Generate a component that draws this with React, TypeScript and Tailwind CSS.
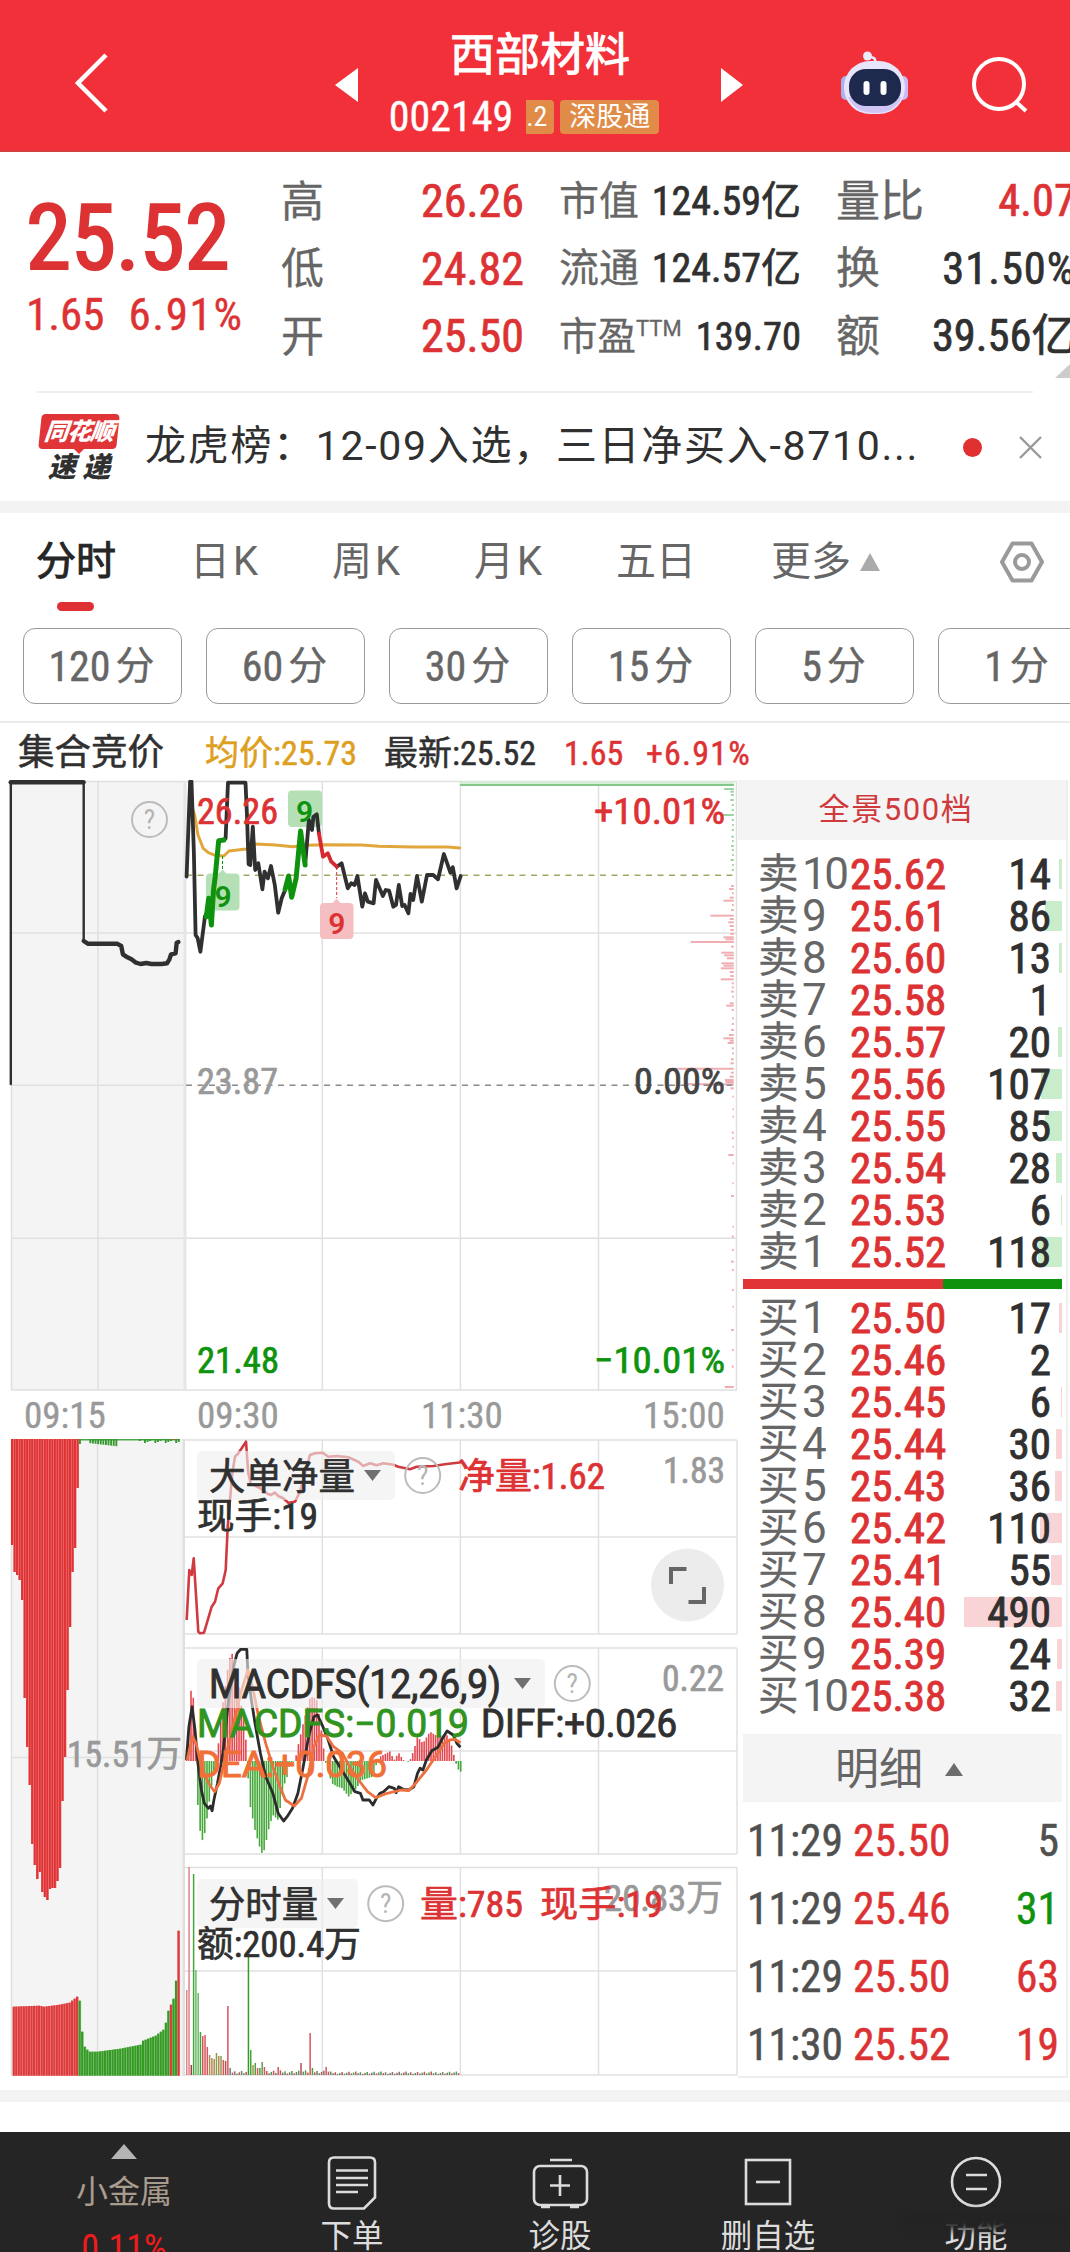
import React from 'react';

type Point = [number, number];

const RED = '#dd3234';
const GREEN = '#0f930f';
const GRID = '#e0e0e0';

// Projects raw sample points into chart coordinates and returns a polyline string
const project = (pts: Point[], ox: number, oy: number, kx: number, ky = 3) =>
  pts.map(([x, y]) => `${(ox + x / kx).toFixed(1)},${(oy + y / ky).toFixed(1)}`).join(' ');

// Linear interpolation over a sorted list of points
const sample = (pts: Point[], x: number) => {
  for (let i = 1; i < pts.length; i++) {
    const [x0, y0] = pts[i - 1];
    const [x1, y1] = pts[i];
    if (x <= x1) return y0 + ((y1 - y0) * (x - x0)) / (x1 - x0 || 1);
  }
  return pts[pts.length - 1][1];
};

const sells: [number, string, number][] = [
  [10, '25.62', 14], [9, '25.61', 86], [8, '25.60', 13], [7, '25.58', 1], [6, '25.57', 20],
  [5, '25.56', 107], [4, '25.55', 85], [3, '25.54', 28], [2, '25.53', 6], [1, '25.52', 118],
];
const buys: [number, string, number][] = [
  [1, '25.50', 17], [2, '25.46', 2], [3, '25.45', 6], [4, '25.44', 30], [5, '25.43', 36],
  [6, '25.42', 110], [7, '25.41', 55], [8, '25.40', 490], [9, '25.39', 24], [10, '25.38', 32],
];
const trades = [
  { time: '11:29', price: '25.50', volume: 5, color: 'text-[#505050]' },
  { time: '11:29', price: '25.46', volume: 31, color: 'text-[#0f930f]' },
  { time: '11:29', price: '25.50', volume: 63, color: 'text-[#dd3234]' },
  { time: '11:30', price: '25.52', volume: 19, color: 'text-[#dd3234]' },
];

const auctionLine: Point[] = [
  [243, 37], [243, 513], [255, 521], [340, 521], [352, 528], [357, 553], [370, 562], [382, 568], [395, 578],
  [408, 582], [425, 579], [440, 582], [470, 582], [485, 580], [492, 568], [497, 553], [510, 550], [513, 518], [518, 516],
];
const priceSegments: { color: string; points: Point[] }[] = [
  { color: '#303030', points: [[542, 320], [552, 35], [556, 35], [563, 250], [568, 495], [574, 505], [582, 545], [595, 440], [600, 430]] },
  { color: '#303030', points: [[650, 210], [655, 205], [662, 38], [713, 38], [717, 130], [722, 283], [727, 285], [734, 170], [741, 300], [750, 280], [762, 358], [768, 305], [778, 325], [787, 288], [798, 345], [808, 428], [818, 385], [828, 360]] },
  { color: '#303030', points: [[886, 285], [897, 150], [906, 180], [910, 140], [920, 133], [926, 190]] },
  { color: '#303030', points: [[978, 290], [992, 280], [1010, 355], [1020, 340], [1030, 345], [1038, 318], [1052, 410], [1060, 370], [1068, 395], [1085, 400], [1092, 330], [1112, 378], [1120, 360], [1130, 362], [1142, 410], [1150, 405], [1158, 345], [1168, 408], [1175, 405], [1186, 430], [1192, 372], [1200, 390], [1211, 318], [1225, 395], [1240, 315], [1258, 315], [1272, 328], [1289, 252], [1308, 308], [1315, 292], [1326, 355], [1338, 318]] },
  { color: GREEN, points: [[599, 440], [606, 385], [614, 465], [620, 360], [625, 320], [628, 285], [635, 212], [650, 210]] },
  { color: GREEN, points: [[828, 358], [838, 318], [847, 382], [860, 325], [873, 183], [886, 285]] },
  { color: '#d8282f', points: [[926, 190], [938, 260], [952, 250], [962, 275], [978, 290]] },
];
const averageLine: Point[] = [
  [556, 105], [565, 135], [575, 195], [590, 235], [605, 248], [625, 256], [650, 258], [665, 243], [715, 237], [742, 222],
  [800, 225], [850, 230], [890, 226], [940, 224], [1050, 225], [1100, 229], [1200, 231], [1300, 231], [1335, 234],
];

// Price distribution along the right edge: [y, length]
const distribution: Point[] = [
  [57, 28], [65, 10], [75, 8], [90, 10], [105, 6], [120, 6], [135, 32], [150, 6], [165, 5], [180, 6], [200, 7], [213, 5], [228, 8],
  [240, 6], [255, 5], [270, 9], [285, 5], [300, 6], [348, 8], [357, 14], [370, 5], [383, 12], [392, 30], [405, 5], [420, 8],
  [437, 68], [447, 12], [457, 16], [468, 12], [480, 10], [492, 10], [502, 30], [508, 24], [516, 125], [530, 8], [548, 36],
  [556, 28], [565, 20], [580, 36], [587, 30], [595, 38], [606, 12], [618, 10], [628, 38], [640, 6], [652, 6], [665, 8],
  [680, 5], [700, 12], [707, 22], [720, 6], [745, 5], [762, 6], [780, 8], [795, 14], [805, 30], [812, 12], [819, 18],
  [835, 6], [850, 5], [868, 8], [880, 10], [896, 172], [908, 8], [920, 12], [930, 26], [936, 24], [943, 140], [955, 10],
  [980, 4], [1018, 4], [1040, 4], [1088, 6], [1105, 5], [1130, 4], [1155, 16], [1180, 4], [1240, 4], [1278, 8],
  [1370, 4], [1400, 6], [1440, 5], [1475, 8], [1500, 5], [1560, 5], [1610, 4], [1680, 8], [1740, 5], [1790, 6], [1851, 26],
];

const netVolumeLine: Point[] = [
  [560, 840], [568, 690], [575, 705], [581, 655], [595, 875], [600, 880], [612, 878], [622, 845], [635, 800], [645, 785],
  [655, 745], [668, 730], [677, 690], [683, 560], [690, 480], [697, 400], [705, 350], [715, 340], [725, 325], [738, 305],
  [745, 400], [752, 430], [790, 450], [800, 460], [812, 465], [825, 458], [835, 468], [850, 475], [865, 488], [885, 485],
  [900, 455], [915, 400], [930, 345], [945, 340], [968, 338], [985, 350], [1010, 348], [1045, 352], [1075, 365],
  [1090, 378], [1110, 370], [1130, 376], [1150, 370], [1180, 374], [1195, 380], [1230, 388], [1250, 380], [1300, 378],
  [1340, 372], [1385, 367],
];

const macdEnvelope: Point[] = [
  [17, 415], [25, 320], [32, 190], [38, 240], [42, 330], [46, 423], [50, 555], [57, 640], [65, 668], [75, 600], [82, 545],
  [92, 470], [98, 430], [104, 415], [110, 340], [120, 250], [133, 150], [143, 95], [150, 110], [160, 150], [170, 250],
  [182, 300], [187, 423], [197, 560], [210, 630], [228, 700], [236, 690], [250, 620], [260, 585], [275, 600], [290, 500],
  [300, 470], [308, 430], [322, 423], [330, 380], [345, 310], [355, 270], [365, 230], [382, 235], [392, 300], [400, 370],
  [407, 423], [425, 490], [440, 500], [455, 505], [472, 530], [490, 510], [510, 480], [540, 470], [552, 425], [560, 410],
  [590, 393], [598, 423], [612, 398], [625, 420], [640, 426], [645, 418], [655, 390], [665, 350], [680, 370], [700, 335],
  [715, 345], [730, 350], [745, 340], [760, 375], [768, 410], [771, 425], [780, 450], [786, 455],
];
const diffLine: Point[] = [
  [18, 420], [25, 320], [34, 260], [42, 330], [50, 430], [60, 510], [68, 550], [80, 565], [85, 558], [90, 572], [95, 540],
  [105, 490], [120, 400], [135, 250], [150, 140], [160, 100], [170, 88], [187, 88], [190, 160], [200, 240], [210, 310],
  [225, 400], [240, 470], [260, 520], [275, 580], [290, 603], [300, 590], [315, 565], [330, 520], [345, 440], [360, 350],
  [375, 290], [385, 285], [400, 320], [415, 360], [430, 410], [450, 445], [470, 480], [490, 515], [505, 520], [512, 540],
  [530, 540], [540, 555], [550, 535], [560, 520], [570, 515], [585, 500], [600, 505], [605, 518], [612, 500], [625, 508],
  [640, 510], [655, 500], [665, 460], [672, 445], [680, 450], [690, 420], [705, 392], [722, 382], [735, 355], [748, 333],
  [765, 345], [775, 370], [785, 382],
];
const deaLine: Point[] = [
  [20, 420], [35, 350], [45, 370], [60, 440], [80, 490], [97, 515], [110, 490], [130, 400], [150, 310], [170, 220],
  [190, 150], [205, 210], [220, 290], [240, 370], [260, 440], [280, 500], [295, 540], [320, 558], [340, 535], [360, 460],
  [375, 380], [390, 345], [410, 348], [430, 380], [455, 400], [475, 440], [500, 480], [525, 515], [548, 533], [580, 520],
  [620, 510], [640, 512], [660, 490], [690, 450], [715, 410], [740, 370], [755, 360], [770, 358], [785, 368],
];

// Bottom edge of every unmatched-volume bar in the call auction
const auctionDepth = [
  1545, 1572, 1575, 1580, 1600, 1698, 1747, 1785, 1844, 1865, 1879, 1872, 1892, 1897, 1900, 1889, 1888, 1888, 1881,
  1868, 1801, 1757, 1690, 1627, 1572, 1548, 1488,
];
const auctionVolume: Point[] = [
  [0, 69], [10, 70], [12, 69], [18, 71], [22, 73], [25, 79], [26, 75], [27, 44], [28, 29], [29, 26], [30, 24], [33, 24],
  [42, 27], [50, 31], [51, 35], [56, 40], [59, 46], [60, 53], [61, 65], [62, 71], [63, 77], [64, 95], [65, 145],
];

// Minute volume: taller bars are listed, the rest is low turnover
const tallVolume: Record<number, [number, string]> = {
  0: [85, '#e0838a'], 1: [208, '#e0838a'], 2: [10, '#9a4040'], 3: [201, '#41a53c'], 4: [105, '#6bb966'], 5: [82, '#6bb966'],
  6: [43, '#41a53c'], 7: [39, '#d8555c'], 8: [40, '#d8555c'], 9: [28, '#d8555c'], 10: [20, '#b08a50'], 11: [17, '#b08a50'],
  12: [16, '#b08a50'], 13: [22, '#8c9a50'], 14: [19, '#b08a50'], 15: [19, '#8c9a50'], 16: [15, '#d8555c'], 17: [14, '#b05050'],
  18: [69, '#d8555c'], 19: [7, '#777777'], 27: [120, '#2f9c2a'], 28: [25, '#41a53c'], 29: [10, '#b08a50'], 30: [12, '#41a53c'],
  31: [7, '#d8555c'], 32: [7, '#41a53c'], 33: [13, '#6b9a50'], 34: [8, '#d8555c'], 40: [8, '#d8555c'], 50: [12, '#b05050'],
  54: [42, '#d8555c'], 55: [7, '#41a53c'], 61: [8, '#d8555c'],
};

interface LabelProps {
  x: number;
  y: number;
  w: number;
  size?: number;
  fill?: string;
  wide?: boolean;
  children: string;
}

// Chart text fitted to a fixed width
const Label: React.FC<LabelProps> = ({ x, y, w, size = 36, fill = '#303030', wide, children }) => (
  <text
    x={x}
    y={y}
    textLength={w}
    lengthAdjust="spacingAndGlyphs"
    fontSize={size}
    fill={fill}
    stroke={fill}
    strokeWidth={wide ? 1 : 0.7}
    className={wide ? "font-['Roboto','Noto_Sans_CJK_SC',sans-serif]" : ''}
  >
    {children}
  </text>
);

const Help: React.FC<{ x: number; y: number }> = ({ x, y }) => (
  <g>
    <circle cx={x} cy={y} r={17.5} fill="none" stroke="#bcbcbc" strokeWidth={2} />
    <text x={x} y={y + 9.5} fontSize={27} fill="#b4b4b4" textAnchor="middle">?</text>
  </g>
);

const Selector: React.FC<{ y: number; w: number; textW: number; wide?: boolean; children: string }> = ({ y, w, textW, wide, children }) => (
  <g>
    <rect x={197} y={y} width={w} height={49} rx={5} fill="#efefef" fillOpacity={0.62} />
    <Label x={209} y={y + 38.5} w={textW} size={wide ? 40 : 37} wide={wide}>{children}</Label>
    <path d={`M${197 + w - 31} ${y + 19}h17l-8.5 11z`} fill="#707070" />
  </g>
);

const PanelGrid: React.FC<{ top: number; mid: number; bottom: number }> = ({ top, mid, bottom }) => (
  <g stroke={GRID} strokeWidth={1.5}>
    {[top, mid, bottom].map((y) => <line key={y} x1={185} x2={737} y1={y} y2={y} />)}
    {[322.3, 460.4, 598.5].map((x) => <line key={x} x1={x} x2={x} y1={top} y2={bottom} />)}
    <line x1={737} x2={737} y1={top} y2={bottom} />
  </g>
);

const PriceChart: React.FC = () => (
  <svg className="h-[612px] w-[738px]" viewBox="0 780 738 612">
    <rect x={11} y={781} width={174} height={609} fill="#f4f4f4" />
    <g stroke={GRID} strokeWidth={1.5}>
      {[781.5, 933, 1238.3, 1390].map((y) => <line key={y} x1={11} x2={737} y1={y} y2={y} />)}
      <line x1={11} x2={185} y1={1085.3} y2={1085.3} />
      {[11.5, 98, 322.3, 460.4, 598.5, 736.5].map((x) => <line key={x} x1={x} x2={x} y1={781} y2={1390} />)}
      <line x1={185} x2={185} y1={781} y2={1390} strokeWidth={3} stroke="#e6e6e6" />
    </g>

    {distribution.map(([y, len]) => (
      <line
        key={y}
        x1={733.8 - len / 2.904}
        x2={733.8}
        y1={770 + y / 3}
        y2={770 + y / 3}
        stroke={y < 320 ? '#9ad3a0' : '#f0aeb2'}
        strokeWidth={2}
      />
    ))}
    <line x1={460} x2={734} y1={783} y2={783} stroke="#d5efd7" strokeWidth={3} />
    <line x1={460} x2={734} y1={785} y2={785} stroke="#83c88a" strokeWidth={2} />

    <line x1={186} x2={737} y1={875.2} y2={875.2} stroke="#a3a561" strokeWidth={1.6} strokeDasharray="6 5.5" />
    <line x1={186} x2={737} y1={1085.3} y2={1085.3} stroke="#8a8a8a" strokeWidth={1.6} strokeDasharray="6 5.5" />

    <g strokeLinejoin="round" strokeLinecap="round" fill="none">
      <path d="M10.8 1084V782" stroke="#303030" strokeWidth={2.4} />
      <path d="M10.8 782.3H83.5" stroke="#303030" strokeWidth={4.6} />
      <polyline points={project(auctionLine.slice(0, 2), 0, 770, 2.904)} stroke="#303030" strokeWidth={2.4} />
      <polyline points={project(auctionLine.slice(1), 0, 770, 2.904)} stroke="#303030" strokeWidth={4.4} />
      <polyline points={project(averageLine, 0, 770, 2.904)} stroke="#e0a63c" strokeWidth={3} />
    </g>

    <path d="M210 873.5h8.5l4-4 4 4h9a4 4 0 0 1 4 4v29a4 4 0 0 1-4 4h-25.5a4 4 0 0 1-4-4v-29a4 4 0 0 1 4-4z" fill="#b5e0b5" />
    <rect x={288} y={790.5} width={34} height={36.5} rx={4} fill="#b5e0b5" />
    <path d="M324 903h8.5l4-4.500 4 4.500h9a4 4 0 0 1 4 4v28a4 4 0 0 1-4 4h-25.5a4 4 0 0 1-4-4v-28a4 4 0 0 1 4-4z" fill="#f5bfc2" />
    <line x1={222.5} x2={222.5} y1={856} y2={870} stroke={GREEN} strokeDasharray="3 2" />
    <line x1={336.7} x2={336.7} y1={867} y2={898} stroke={RED} strokeDasharray="3 2" />

    <g strokeLinejoin="round" strokeLinecap="round" fill="none">
      {priceSegments.map((s, i) => (
        <polyline key={i} points={project(s.points, 0, 770, 2.904)} stroke={s.color} strokeWidth={s.color === GREEN ? 5 : 3.8} />
      ))}
    </g>
    <g fontSize={30} textAnchor="middle" className="font-['Roboto'] font-semibold">
      <text x={223} y={906.5} fill={GREEN}>9</text>
      <text x={304.5} y={822} fill={GREEN}>9</text>
      <text x={336.7} y={934} fill={RED}>9</text>
    </g>

    <Help x={149.5} y={819.5} />
    <Label x={197} y={823.5} w={81} size={37} fill={RED}>26.26</Label>
    <Label x={594} y={824} w={131} size={37} fill={RED}>+10.01%</Label>
    <Label x={197} y={1094} w={81} size={37} fill="#999999">23.87</Label>
    <Label x={634} y={1094} w={91} size={37} fill="#444444">0.00%</Label>
    <Label x={197} y={1373} w={82} size={37} fill={GREEN}>21.48</Label>
    <Label x={594} y={1373} w={131} size={37} fill={GREEN}>−10.01%</Label>
  </svg>
);

const AuctionVolume: React.FC = () => (
  <svg className="h-[640px] w-[185px]" viewBox="0 1438 185 640">
    <rect x={11} y={1439} width={174} height={637} fill="#f4f4f4" />
    <g stroke={GRID} strokeWidth={1.5}>
      <line x1={11} x2={185} y1={1757.5} y2={1757.5} />
      <line x1={97.5} x2={97.5} y1={1439} y2={2076} />
      <line x1={11.5} x2={11.5} y1={1439} y2={2076} />
      <line x1={184} x2={184} y1={1439} y2={2076} strokeWidth={3} />
    </g>
    {auctionDepth.map((y, i) => (
      <g key={i}>
        <rect x={11 + i * 2.52} y={1439} width={2.52} height={y - 1439} fill="#ec7a7a" />
        <rect x={11 + i * 2.52} y={1439} width={2} height={y - 1439} fill="#df3335" />
      </g>
    ))}
    <rect x={79} y={1439} width={101} height={1.5} fill="#4fa64b" />
    {Array.from({ length: 39 }, (_, i) => {
      const h = i === 0 ? 5 : i > 3 && i < 15 ? 3 + i * 0.3 : i > 22 ? 1 + ((i * 7) % 4) : 0;
      return <rect key={i} x={79 + i * 2.6} y={1439} width={1.9} height={h} fill={i === 36 ? RED : '#35992f'} />;
    })}
    {Array.from({ length: 66 }, (_, i) => {
      const h = sample(auctionVolume, i);
      const red = i < 26 || i === 62 || i === 65;
      return (
        <g key={i}>
          <rect x={12.7 + i * 2.535} y={2075.7 - h} width={2.535} height={h} fill={red ? '#ec7f7f' : '#86c67e'} />
          <rect x={12.7 + i * 2.535} y={2075.7 - h} width={2} height={h} fill={red ? '#dc3a3c' : '#359a24'} />
        </g>
      );
    })}
    <Label x={67} y={1766.5} w={115} size={37} fill="#999999">15.51万</Label>
  </svg>
);

const NetVolumePanel: React.FC = () => (
  <svg className="h-[204px] w-[553px]" viewBox="185 1438 553 204">
    <PanelGrid top={1440} mid={1537} bottom={1634} />
    <polyline points={project(netVolumeLine, 0, 1340, 3)} fill="none" stroke="#cf3b40" strokeWidth={2.6} strokeLinejoin="round" />
    <Selector y={1451} w={198} textW={146}>大单净量</Selector>
    <Help x={422.7} y={1475.5} />
    <Label x={458} y={1488.5} w={147} fill={RED}>净量:1.62</Label>
    <Label x={197} y={1528.5} w={121}>现手:19</Label>
    <Label x={663} y={1483} w={62} size={37} fill="#999999">1.83</Label>
    <circle cx={687.5} cy={1585} r={36.5} fill="#ececec" />
    <path d="M671 1584v-15h15.5M704 1587v15h-15.5" fill="none" stroke="#666666" strokeWidth={4} />
  </svg>
);

const MacdPanel: React.FC = () => (
  <svg className="h-[217px] w-[553px]" viewBox="185 1642 553 217">
    <PanelGrid top={1648} mid={1751} bottom={1854} />
    {Array.from({ length: 121 }, (_, i) => {
      const x = 18 + i * 6.4;
      const y = sample(macdEnvelope, x);
      const up = y < 423;
      return (
        <rect
          key={i}
          x={180 + x / 2.8 - 0.8}
          y={1620 + Math.min(y, 423) / 3}
          width={1.6}
          height={Math.abs(y - 423) / 3}
          fill={up ? '#e3474f' : '#45a83a'}
        />
      );
    })}
    <polyline points={project(diffLine, 180, 1620, 2.8)} fill="none" stroke="#2c2c2c" strokeWidth={2.8} strokeLinejoin="round" />
    <polyline points={project(deaLine, 180, 1620, 2.8)} fill="none" stroke="#ee7040" strokeWidth={2.8} strokeLinejoin="round" />
    <Selector y={1659} w={348} textW={292} wide>MACDFS(12,26,9)</Selector>
    <Help x={572.3} y={1683.5} />
    <Label x={662} y={1691} w={62} size={37} fill="#999999">0.22</Label>
    <Label x={197} y={1736.5} w={272} size={39} fill="#31941f" wide>MACDFS:−0.019</Label>
    <Label x={481} y={1736.5} w={196} size={39} wide>DIFF:+0.026</Label>
    <Label x={197} y={1776.5} w={190} size={37} fill="#f07038" wide>DEA:+0.036</Label>
  </svg>
);

const VolumePanel: React.FC = () => (
  <svg className="h-[219px] w-[553px]" viewBox="185 1859 553 219">
    <PanelGrid top={1867.5} mid={1971} bottom={2075} />
    {Array.from({ length: 120 }, (_, i) => {
      const noise = 1.5 + ((i * 37) % 11) / 3.2;
      const fallback = ['#777777', '#4f9a4a', '#c0565a'][(i * 13) % 3];
      const [h, color] = tallVolume[i] ?? [i > 62 ? noise * 0.75 : noise, fallback];
      return <rect key={i} x={186 + i * 2.285} y={2075 - h} width={1.5} height={h} fill={color} />;
    })}
    <Selector y={1879} w={161} textW={109}>分时量</Selector>
    <Help x={385.7} y={1903.7} />
    <Label x={604} y={1911} w={119} size={37} fill="#999999">20.83万</Label>
    <Label x={420} y={1917} w={103} fill={RED}>量:785</Label>
    <Label x={540} y={1917} w={123} fill={RED}>现手:19</Label>
    <Label x={197} y={1957} w={164}>额:200.4万</Label>
  </svg>
);

const Header: React.FC = () => (
  <header className="flex h-[152px] items-center border-b-2 border-[#d63c3c] bg-[#f23039] text-white">
    <svg className="mt-[16px] ml-[72px] h-[62px] w-[40px] shrink-0" viewBox="0 0 40 62" fill="none" stroke="currentColor" strokeWidth={4.5}>
      <path d="M34 3L6 31l28 28" />
    </svg>
    <svg className="mt-[19px] ml-[223px] h-[34px] w-[24px] shrink-0" viewBox="0 0 24 34">
      <path d="M0 17L23 0v34z" fill="currentColor" />
    </svg>
    <div className="flex w-[362px] shrink-0 flex-col items-center">
      <h1 className="mt-[16px] text-[45px] leading-[50px] [-webkit-text-stroke:1px]">西部材料</h1>
      <div className="mt-[18px] flex h-[36px] items-center gap-[6px] pr-[32px]">
        <span className="mr-[7px] text-[42px] leading-[36px] [-webkit-text-stroke:0.4px]">002149</span>
        <span className="flex h-[34px] w-[28px] items-center overflow-hidden rounded-r-[4px] bg-[#e08c48] text-[28px]">.2</span>
        <span className="flex h-[34px] w-[99px] items-center justify-center rounded-[4px] bg-[#e08c48] text-[27px]">深股通</span>
      </div>
    </div>
    <svg className="mt-[19px] h-[34px] w-[24px] shrink-0" viewBox="0 0 24 34">
      <path d="M0 0L22 17L0 34z" fill="currentColor" />
    </svg>
    <svg className="mt-[16px] ml-[93px] h-[64px] w-[72px] shrink-0" viewBox="838 51 72 64">
      <path d="M875 64c1-6-1-7-6-7" fill="none" stroke="#e9e6f8" strokeWidth={2.5} />
      <circle cx={867.5} cy={56} r={4.5} fill="#eceafb" />
      <rect x={841} y={76} width={10} height={24} rx={5} fill="#a9b4ee" />
      <rect x={898} y={76} width={10} height={24} rx={5} fill="#c9b9f5" />
      <rect x={844} y={61} width={61} height={53} rx={26} fill="#e8e4fa" />
      <path d="M848 97c6 12 14 16 27 16s21-4 27-16z" fill="#cfc6f5" />
      <rect x={849} y={69} width={52} height={37} rx={17} fill="#1e2a4d" />
      <rect x={863.5} y={81} width={6} height={14} rx={3} fill="#ffffff" />
      <rect x={880.5} y={81} width={6} height={14} rx={3} fill="#ffffff" />
    </svg>
    <svg className="mt-[20px] ml-[60px] h-[60px] w-[60px] shrink-0" viewBox="971 55 60 60" fill="none" stroke="currentColor" strokeWidth={4}>
      <circle cx={1000} cy={84} r={25} />
      <path d="M1016 101l11 10" />
    </svg>
  </header>
);

const Quote: React.FC = () => {
  const row = 'flex h-[67.5px] items-center justify-between whitespace-nowrap';
  const label = 'text-[#666] [-webkit-text-stroke:0.3px]';
  return (
    <section className="relative flex h-[239px] overflow-hidden pt-[16px] text-[#303030] [-webkit-text-stroke:0.7px]">
      <div className="ml-[26px] w-[255px] shrink-0 text-[#dd3234]">
        <div className="mt-[15px] text-[91px] leading-[110px] [-webkit-text-stroke:2.2px]">25.52</div>
        <div className="-mt-[4px] flex gap-[24px] text-[45px] leading-[52px] [-webkit-text-stroke:0.4px]">
          <span>1.65</span>
          <span className="tracking-[1.6px]">6.91%</span>
        </div>
      </div>
      <div className="w-[243px] shrink-0 text-[46px] text-[#dd3234]">
        {[['高', '26.26'], ['低', '24.82'], ['开', '25.50']].map(([k, v]) => (
          <div key={k} className={row}>
            <span className={`text-[43px] ${label}`}>{k}</span>
            <span>{v}</span>
          </div>
        ))}
      </div>
      <div className="ml-[35px] w-[242px] shrink-0 text-[40px]">
        {[['市值', '124.59亿'], ['流通', '124.57亿']].map(([k, v]) => (
          <div key={k} className={row}>
            <span className={`text-[40px] ${label}`}>{k}</span>
            <span>{v}</span>
          </div>
        ))}
        <div className={row}>
          <span className={`flex text-[38.5px] ${label}`}>
            市盈<span className="font-['Roboto'] text-[22px] leading-[42px]">TTM</span>
          </span>
          <span className="text-[38.5px]">139.70</span>
        </div>
      </div>
      <div className="ml-[35px] w-[240px] shrink-0 text-[44.5px]">
        {[['量比', '4.07'], ['换', '31.50%'], ['额', '39.56亿']].map(([k, v]) => (
          <div key={k} className={row}>
            <span className={`text-[44px] ${label}`}>{k}</span>
            <span className={k === '量比' ? 'text-[#dd3234]' : k === '换' ? 'tracking-[1px]' : ''}>{v}</span>
          </div>
        ))}
      </div>
      <svg className="absolute right-0 bottom-[13px] h-[14px] w-[15px]" viewBox="0 0 15 14">
        <path d="M15 0v14H0z" fill="#cccccc" />
      </svg>
    </section>
  );
};

const News: React.FC = () => (
  <section className="flex h-[110px] items-center px-[37px]">
    <div className="flex h-full w-full items-center border-t-2 border-[#eeeeee]">
      <div className="flex w-[84px] shrink-0 flex-col items-center font-black italic">
        <div className="flex h-[35px] w-[78px] -skew-x-6 items-center justify-center rounded-[4px] bg-[#e03436] text-[24px] tracking-[-1px] text-white">同花顺</div>
        <div className="h-0 w-0 border-x-[5px] border-t-[5px] border-x-transparent border-t-[#e03436]" />
        <div className="text-[28px] leading-[27px] text-[#303030]">速 递</div>
      </div>
      <div className="ml-[24px] w-[778px] shrink-0 font-['Roboto','Noto_Sans_CJK_SC',sans-serif] text-[41px] tracking-[1.7px] whitespace-nowrap text-[#303030]">
        龙虎榜：12-09入选，三日净买入-8710...
      </div>
      <div className="ml-[40px] h-[19px] w-[19px] shrink-0 rounded-full bg-[#e03030]" />
      <svg className="ml-[37px] h-[23px] w-[23px] shrink-0" viewBox="0 0 23 23" stroke="#999999" strokeWidth={2.4}>
        <path d="M1 1l21 21M22 1L1 22" />
      </svg>
    </div>
  </section>
);

const Tabs: React.FC = () => (
  <nav className="flex h-[115px] items-start pl-[36px] text-[40px] leading-[98px] text-[#666]">
    <div className="flex w-[154px] flex-col items-start">
      <span className="text-[#262626] [-webkit-text-stroke:1px]">分时</span>
      <span className="-mt-[9px] ml-[21px] h-[9px] w-[37px] rounded-full bg-[#df3033]" />
    </div>
    {['日K', '周K', '月K'].map((t) => (
      <span key={t} className="w-[142px] font-['Roboto','Noto_Sans_CJK_SC',sans-serif] tracking-[3px]">{t}</span>
    ))}
    <span className="w-[155px]">五日</span>
    <span className="w-[89px]">更多</span>
    <svg className="mt-[40px] h-[18px] w-[20px]" viewBox="0 0 20 18"><path d="M10 0l10 18H0z" fill="#aaaaaa" /></svg>
    <svg className="mt-[26px] ml-[119px] h-[46px] w-[46px]" viewBox="0 0 46 46" fill="none" stroke="#9a9a9a" strokeWidth={4}>
      <path d="M13.5 4.500h19L43 23L32.5 41.500h-19L3 23z" strokeLinejoin="round" />
      <circle cx={23} cy={23} r={7} />
    </svg>
  </nav>
);

const Periods: React.FC = () => (
  <div className="flex h-[95px] gap-[24px] overflow-hidden border-b-2 border-[#ebebeb] pl-[23px]">
    {[120, 60, 30, 15, 5, 1].map((n) => (
      <button
        key={n}
        className="flex h-[76px] w-[159px] shrink-0 items-center justify-center gap-[5px] rounded-[12px] border-[1.5px] border-[#999] pr-[2px] text-[42px] text-[#666] [-webkit-text-stroke:0.4px]"
      >
        {n}<span className="text-[39px]">分</span>
      </button>
    ))}
  </div>
);

const Depth: React.FC<{ side: string; bar: string; rows: [number, string, number][] }> = ({ side, bar, rows }) => (
  <>
    {rows.map(([level, price, volume]) => (
      <div key={level} className="flex h-[42px] items-center text-[43px] leading-[42px] text-[#303030]">
        <span className="flex w-[92px] items-center text-[#666]">
          <span className="w-[44px] text-[40.5px] [-webkit-text-stroke:0.3px]">{side}</span>
          <span className="font-['Roboto'] text-[44px] tracking-[-2.5px]">{level}</span>
        </span>
        <span className="w-[96px] text-[#dd3234] [-webkit-text-stroke:0.9px]">{price}</span>
        <span className="relative flex h-[30px] w-[116px] items-center justify-end pr-[11px] [-webkit-text-stroke:0.9px]">
          <span className={`absolute inset-y-0 right-0 ${bar}`} style={{ width: volume < 3 ? 0 : Math.max(1, volume * 0.2) }} />
          <span className="relative">{volume}</span>
        </span>
      </div>
    ))}
  </>
);

const OrderBook: React.FC = () => (
  <aside className="flex h-[1298px] w-[330px] flex-col border-r-2 border-b-2 border-[#eeeeee]">
    <div className="flex h-[60px] shrink-0 items-center justify-center bg-[#f4f4f4] pr-[12px] font-['Roboto','Noto_Sans_CJK_SC',sans-serif] text-[31px] tracking-[1.6px] text-[#d03a3c]">
      全景500档
    </div>
    <div className="mt-[13px] pl-[20px]">
      <Depth side="卖" bar="bg-[#c9eccb]" rows={sells} />
    </div>
    <div className="mt-[6px] ml-[5px] flex h-[10px] w-[319px] shrink-0">
      <div className="w-[200px] bg-[#e03436]" />
      <div className="flex-1 bg-[#0f930f]" />
    </div>
    <div className="mt-[8px] pl-[20px]">
      <Depth side="买" bar="bg-[#f8d4d6]" rows={buys} />
    </div>
    <div className="mt-[17px] ml-[5px] flex h-[68px] w-[319px] shrink-0 items-center gap-[22px] bg-[#f4f4f4] pt-[3px] pl-[92px] text-[44px] leading-[60px] text-[#666]">
      明细
      <svg className="h-[13px] w-[18px]" viewBox="0 0 18 13"><path d="M9 0l9 13H0z" fill="#6c6c6c" /></svg>
    </div>
    <div className="mt-[5px] pl-[9px] text-[43.5px] [-webkit-text-stroke:0.5px]">
      {trades.map((t, i) => (
        <div key={i} className="flex h-[68.3px] items-center text-[#505050]">
          <span className="w-[106px]">{t.time}</span>
          <span className="w-[96px] text-[#dd3234]">{t.price}</span>
          <span className={`w-[110px] text-right ${t.color}`}>{t.volume}</span>
        </div>
      ))}
    </div>
  </aside>
);

const BottomNav: React.FC = () => {
  const item = 'flex w-[208px] shrink-0 flex-col items-center pt-[22px]';
  const icon = 'h-[56px] w-[60px] shrink-0';
  return (
    <footer className="flex h-[120px] overflow-hidden bg-[#252525] text-[31.5px] leading-[38px] text-[#dcdcdc]">
      <div className="flex w-[248px] shrink-0 flex-col items-center pt-[12px]">
        <svg className="h-[15px] w-[26px] shrink-0" viewBox="0 0 26 15"><path d="M13 0l13 15H0z" fill="#b5b5b5" /></svg>
        <span className="mt-[14px] shrink-0 text-[32px] text-[#a89c8e]">小金属</span>
        <span className="mt-[18px] shrink-0 text-[36px] text-[#ee1c1c]">0.11%</span>
      </div>
      <div className={item}>
        <svg className={icon} viewBox="0 0 60 56" fill="none" stroke="currentColor" strokeWidth={2.6}>
          <path d="M12 3.500h36q5 0 5 5v35l-11 11H12q-5 0-5-5v-41q0-5 5-5z" />
          <path d="M14 16.500h32M14 24h32M14 31h32M14 38h22" />
        </svg>
        <span className="mt-[8px] shrink-0">下单</span>
      </div>
      <div className={item}>
        <svg className={icon} viewBox="0 0 60 56" fill="none" stroke="currentColor" strokeWidth={2.6}>
          <rect x={4} y={12} width={53} height={39} rx={6} />
          <path d="M20 6h22M30 21v21M20 31.500h20M11 53h9M40 53h9" />
        </svg>
        <span className="mt-[8px] shrink-0">诊股</span>
      </div>
      <div className={item}>
        <svg className={icon} viewBox="0 0 60 56" fill="none" stroke="currentColor" strokeWidth={2.6}>
          <rect x={8} y={6} width={44} height={44} />
          <path d="M18 28h24" />
        </svg>
        <span className="mt-[8px] shrink-0">删自选</span>
      </div>
      <div className={`${item} relative`}>
        <svg className={icon} viewBox="0 0 60 56" fill="none" stroke="currentColor" strokeWidth={2.6}>
          <circle cx={30} cy={28} r={24} />
          <path d="M20 21h21M20 35h21" />
        </svg>
        <span className="mt-[8px] shrink-0">功能</span>
        <div className="absolute top-[80px] left-[30px] h-[18px] w-[170px] bg-[#232323] blur-[4px]" />
      </div>
    </footer>
  );
};

const App: React.FC = () => (
  <div className="h-[2252px] w-[1070px] overflow-hidden bg-white font-['Roboto_Condensed','Noto_Sans_CJK_SC',sans-serif]">
    <Header />
    <Quote />
    <News />
    <div className="h-[12px] bg-[#f3f3f3]" />
    <Tabs />
    <Periods />
    <div className="flex h-[57px] items-center pt-[2px] pl-[18px] text-[34px] leading-[50px] whitespace-nowrap text-[#303030] [-webkit-text-stroke:0.5px]">
      <span className="w-[187px] text-[36.5px]">集合竞价</span>
      <span className="w-[179px] text-[#dda01e]">均价:25.73</span>
      <span className="w-[180px]">最新:25.52</span>
      <span className="w-[82px] text-[#dd3234]">1.65</span>
      <span className="tracking-[1.2px] text-[#dd3234]">+6.91%</span>
    </div>
    <main className="flex h-[1310px]">
      <div className="w-[738px]">
        <PriceChart />
        <div className="flex h-[46px] items-center pt-[2px] pl-[24px] text-[37px] leading-[46px] text-[#999] [-webkit-text-stroke:0.4px]">
          <span className="w-[173px]">09:15</span>
          <span className="w-[224px]">09:30</span>
          <span className="w-[222px]">11:30</span>
          <span>15:00</span>
        </div>
        <div className="flex">
          <AuctionVolume />
          <div>
            <NetVolumePanel />
            <MacdPanel />
            <VolumePanel />
          </div>
        </div>
      </div>
      <OrderBook />
    </main>
    <div className="h-[12px] bg-[#f3f3f3]" />
    <div className="h-[30px]" />
    <BottomNav />
  </div>
);

export default App;
